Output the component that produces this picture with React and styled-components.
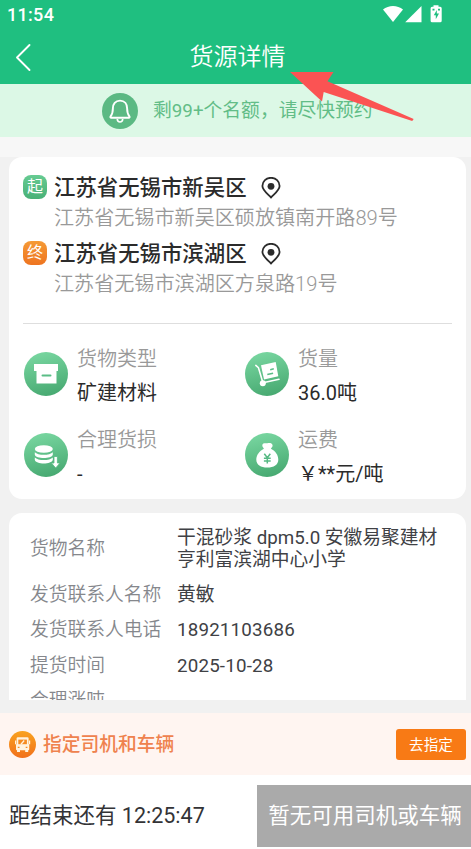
import React from 'react';
import styled, { createGlobalStyle } from 'styled-components';

const GlobalStyle = createGlobalStyle`
  * {
    box-sizing: border-box;
  }

  body {
    margin: 0;
    font-family: Roboto, 'Noto Sans CJK SC', sans-serif;
    background: #f1f1f1;
  }
`;

const Page = styled.div`
  width: 100%;
  max-width: 471px;
  height: 849px;
  display: flex;
  flex-direction: column;
  overflow: hidden;
  position: relative;
  background: linear-gradient(#f7f7f7 157px, #f1f1f1 157px);
`;

const Header = styled.header`
  height: 84px;
  flex-shrink: 0;
  background: #1fbf80;
  color: #fff;
`;

const StatusBar = styled.div`
  height: 29px;
  padding: 0 28px 0 7px;
  display: flex;
  align-items: center;
  justify-content: space-between;
`;

const Clock = styled.span`
  font-size: 18px;
  font-weight: 500;
  letter-spacing: 0.3px;
  line-height: 29px;
`;

const NavBar = styled.div`
  height: 55px;
  padding: 0 14px;
  display: grid;
  grid-template-columns: 20px 1fr 16px;
  align-items: center;
`;

const Title = styled.h1`
  margin: 0;
  padding-top: 2px;
  font-size: 24px;
  font-weight: 350;
  line-height: 53px;
  text-align: center;
`;

const Notice = styled.div`
  height: 53px;
  flex-shrink: 0;
  padding-left: 102px;
  display: flex;
  align-items: center;
  gap: 15px;
  background: #dcf8e6;
  color: #62bd87;
  font-size: 18.8px;
  white-space: nowrap;
`;

const NoticeText = styled.span`
  padding-bottom: 4px;
`;

const Content = styled.main`
  height: 563px;
  flex-shrink: 0;
  padding: 20px 5px 0 9px;
  display: flex;
  flex-direction: column;
  gap: 14px;
  overflow: hidden;
`;

const Card = styled.section`
  flex-shrink: 0;
  background: #fff;
  border-radius: 13px;
`;

const RouteCard = styled(Card)`
  height: 342px;
  padding: 14px 14px 0;
`;

const Stop = styled.div`
  height: 66px;
  display: grid;
  grid-template-columns: 31px 1fr;
`;

const StopBadge = styled.span`
  width: 24px;
  height: 24px;
  margin-top: 4px;
  border-radius: 8px;
  color: #fff;
  font-size: 16px;
  line-height: 24px;
  text-align: center;
  background: ${(props) =>
    props.$end ? 'linear-gradient(#f59a35, #ee7420)' : 'linear-gradient(#66cb92, #48b077)'};
`;

const StopCity = styled.div`
  display: flex;
  align-items: center;
  gap: 14px;
  height: 33px;
  color: #2b2b2b;
  font-size: 21.4px;
  font-weight: 500;
`;

const CityName = styled.span`
  line-height: 28px;
`;

const StopAddress = styled.div`
  color: #999;
  font-size: 20.1px;
  font-weight: 350;
  line-height: 28px;
`;

const Divider = styled.div`
  height: 1px;
  margin-top: 20px;
  background: #dedede;
`;

const Facts = styled.div`
  display: grid;
  grid-template-columns: 221px 1fr;
  grid-auto-rows: 81px;
  padding-top: 18px;
`;

const Fact = styled.div`
  display: flex;
  gap: 9px;
  padding-left: 1px;
`;

const FactIcon = styled.svg`
  width: 44px;
  height: 44px;
  margin-top: 10px;
  flex-shrink: 0;
`;

const FactLabel = styled.div`
  color: #999;
  font-size: 20px;
  font-weight: 350;
  line-height: 34px;
`;

const FactValue = styled.div`
  color: #2b2b2b;
  font-size: 20px;
  line-height: 34px;
`;

const DetailCard = styled(Card)`
  padding: 15px 21px 0;
  display: flex;
  flex-direction: column;
  gap: 13.6px;
  border-radius: 13px 13px 0 0;
  height: 187px;
  overflow: hidden;
`;

const DetailRow = styled.div`
  display: grid;
  grid-template-columns: 147px 1fr;
  align-items: center;
  flex-shrink: 0;
  min-height: 21.7px;
  font-size: 18.75px;
  line-height: 21.7px;
`;

const DetailLabel = styled.span`
  color: #85878c;
  font-weight: 350;
`;

const DetailValue = styled.span`
  color: #404145;
  letter-spacing: ${(props) => (props.$numeric ? '0.18px' : 'normal')};
`;

const DriverBar = styled.div`
  height: 62px;
  flex-shrink: 0;
  margin-top: 13px;
  padding: 0 5px 0 9px;
  display: flex;
  align-items: center;
  gap: 7px;
  background: #fff5f1;
`;

const DriverText = styled.span`
  flex: 1;
  padding-bottom: 3px;
  color: #ef824e;
  font-size: 18.75px;
  font-weight: 500;
`;

const AssignButton = styled.button`
  width: 70px;
  height: 31px;
  padding: 0;
  border: none;
  border-radius: 3px;
  background: #f87a15;
  color: #fff;
  font-family: inherit;
  font-size: 14.6px;
  line-height: 32px;
`;

const BottomBar = styled.div`
  height: 74px;
  flex-shrink: 0;
  padding-left: 9px;
  display: flex;
  align-items: flex-start;
  justify-content: space-between;
  padding-top: 10px;
  background: #fff;
`;

const Countdown = styled.span`
  color: #333336;
  font-size: 21.5px;
  line-height: 62px;
  white-space: nowrap;
`;

const DisabledButton = styled.button`
  width: 214px;
  height: 62px;
  padding: 0 0 0 2px;
  border: none;
  background: #aaa;
  color: #fff;
  font-family: inherit;
  font-size: 21.5px;
  line-height: 62px;
  white-space: nowrap;
`;

const Pointer = styled.svg`
  position: absolute;
  left: 288px;
  top: 70px;
  pointer-events: none;
`;

const stops = [
  { tag: '起', city: '江苏省无锡市新吴区', address: '江苏省无锡市新吴区硕放镇南开路89号' },
  { tag: '终', city: '江苏省无锡市滨湖区', address: '江苏省无锡市滨湖区方泉路19号', end: true },
];

const facts = [
  { icon: 'box', label: '货物类型', value: '矿建材料' },
  { icon: 'cart', label: '货量', value: '36.0吨' },
  { icon: 'coins', label: '合理货损', value: '-' },
  { icon: 'bag', label: '运费', value: '￥**元/吨' },
];

const details = [
  { label: '货物名称', value: '干混砂浆 dpm5.0 安徽易聚建材亨利富滨湖中心小学' },
  { label: '发货联系人名称', value: '黄敏' },
  { label: '发货联系人电话', value: '18921103686', numeric: true },
  { label: '提货时间', value: '2025-10-28', numeric: true },
  { label: '合理涨吨', value: '' },
];

// white glyphs drawn inside the 44px green circles
const glyphs = {
  box: (
    <>
      <path d="M10 12h24v7H10z" fill="#fff" />
      <path d="M12.5 18h20v13.5h-20z" fill="#fff" />
      <path d="M18.5 23.5h8" stroke="#5abd86" strokeWidth="2" strokeLinecap="round" />
    </>
  ),
  cart: (
    <>
      <path d="M16 13.3l14.7-3.2 2.6 14.1L19 27.6z" fill="#fff" />
      <path d="M25.2 17.7l3.6-.9M22.3 22.6l5.8-1.4" stroke="#5abd86" strokeWidth="1.5" />
      <path d="M10.8 13.4l2.6 2.2 4.3 14.3" fill="none" stroke="#fff" strokeWidth="1.6" strokeLinecap="round" />
      <path d="M18 30.8l16-3.6" stroke="#fff" strokeWidth="1.6" strokeLinecap="round" />
      <circle cx="17.8" cy="31.2" r="3" fill="#fff" />
    </>
  ),
  coins: (
    <>
      <g fill="#fff">
        <ellipse cx="19.8" cy="16" rx="9" ry="3.8" />
        <path d="M10.8 19.2c3 3.4 15 3.4 18 0v2.6c-1 4.4-17 4.4-18 0z" />
        <path d="M10.8 24.4c3 3.4 15 3.4 18 0v2.4c-1 5-17 5-18 0z" />
      </g>
      <path d="M30 23.5h3.4V30H36l-4.3 5-4.3-5H30z" fill="#fff" stroke="#57ba84" strokeWidth="0.8" />
    </>
  ),
  bag: (
    <>
      <path d="M17.3 12.6c0-3 3-2.2 5-2.4 2-.4 5-.4 5.3 2 .1 1.8-1.3 2.6-1.7 3.5 4.7 2.3 7.4 6.4 7.4 11 0 5-4.5 7.8-11 7.8s-11-2.8-11-7.8c0-4.6 3-8.7 7.6-11-.4-.9-1.6-1.6-1.6-3.1z" fill="#fff" />
      <path d="M19.3 20.7l3 4 3-4M18.9 25.2h6.8M18.9 28h6.8M22.3 24.5v6" fill="none" stroke="#57ba84" strokeWidth="1.5" />
    </>
  ),
};

function CircleIcon({ name }) {
  return (
    <FactIcon viewBox="0 0 44 44">
      <defs>
        <linearGradient id={`green-${name}`} x1="0.35" y1="0" x2="0.6" y2="1">
          <stop offset="0" stopColor="#78d6a0" />
          <stop offset="1" stopColor="#47a971" />
        </linearGradient>
      </defs>
      <circle cx="22" cy="22" r="22" fill={`url(#green-${name})`} />
      {glyphs[name]}
    </FactIcon>
  );
}

function StatusIcons() {
  return (
    <svg width="61" height="19" viewBox="0 0 61 19" fill="#fff">
      <path d="M1 4.4C6.5-.3 15.5-.3 21 4.4L11 17z" />
      <path d="M39.5.9v16.3H23.2z" />
      <path d="M51.5 1.8V.3h5v1.5h1.7q1.5 0 1.5 1.5v12.4q0 1.5-1.5 1.5h-8.1q-1.5 0-1.5-1.500V3.300q0-1.500 1.500-1.500z" />
      <path d="M54.8 5L51.800 10.200h2v4l3.200-5.600h-2.200zM50.500 3.800h2v1.800h-2zM56 3.800h2v1.800h-2z" fill="#1fbf80" />
    </svg>
  );
}

function PinIcon() {
  return (
    <svg width="20" height="22" viewBox="0 0 20 22">
      <path d="M10 20.5C6.2 16.6 1.4 13 1.4 9A8.6 8.2 0 0 1 18.600 9C18.600 13 13.800 16.600 10 20.500z" fill="none" stroke="#2b2b2b" strokeWidth="1.8" strokeLinejoin="round" />
      <circle cx="10" cy="9.3" r="3.4" fill="#2b2b2b" />
    </svg>
  );
}

function BellIcon() {
  return (
    <svg width="36" height="36" viewBox="0 0 36 36">
      <circle cx="18" cy="18" r="18" fill="#5bb983" />
      <path d="M18 7.6c-4.7 0-7.1 3.5-7.1 7.7 0 4.7-.8 6.2-2.3 8-.5.7-.2 1.5.7 1.5h17.4c.9 0 1.2-.8.7-1.5-1.5-1.8-2.3-3.3-2.3-8 0-4.2-2.4-7.7-7.100-7.700z" fill="none" stroke="#fff" strokeWidth="1.9" />
      <path d="M15.3 26c.2 4 5.2 4 5.400 0" fill="none" stroke="#fff" strokeWidth="1.7" />
    </svg>
  );
}

function TruckIcon() {
  return (
    <svg width="27" height="27" viewBox="0 0 27 27">
      <defs>
        <linearGradient id="orange" x1="0" y1="0" x2="0" y2="1">
          <stop offset="0" stopColor="#f9a21f" />
          <stop offset="1" stopColor="#f1701b" />
        </linearGradient>
      </defs>
      <circle cx="13.5" cy="13.5" r="13.5" fill="url(#orange)" />
      <g fill="#fff3df">
        <rect x="7.6" y="6.2" width="12" height="9" rx="1.2" />
        <rect x="7" y="13" width="13.2" height="6.200" rx="1" />
        <rect x="6" y="9.500" width="1.200" height="3.800" />
        <rect x="20" y="9.500" width="1.200" height="3.800" />
        <rect x="8" y="18.500" width="3" height="2.500" />
        <rect x="16.200" y="18.500" width="3" height="2.500" />
      </g>
      <rect x="9.300" y="8.600" width="8.600" height="4.600" fill="#f58b20" />
      <path d="M12 13.200l3.200-3.700" stroke="#fff3df" strokeWidth="1.3" />
      <path d="M8.8 16.300h1.700M16.700 16.300h1.700" stroke="#f58b20" strokeWidth="1.3" />
    </svg>
  );
}

function App() {
  return (
    <>
      <GlobalStyle />
      <Page>
        <Header>
          <StatusBar>
            <Clock>11:54</Clock>
            <StatusIcons />
          </StatusBar>
          <NavBar>
            <svg width="20" height="30" viewBox="0 0 20 30">
              <path d="M15.5 3L3 15.5 15.5 28" fill="none" stroke="#fff" strokeWidth="1.9" strokeLinecap="round" strokeLinejoin="round" />
            </svg>
            <Title>货源详情</Title>
          </NavBar>
        </Header>

        <Notice>
          <BellIcon />
          <NoticeText>剩99+个名额，请尽快预约</NoticeText>
        </Notice>

        <Content>
          <RouteCard>
            {stops.map((stop) => (
              <Stop key={stop.tag}>
                <StopBadge $end={stop.end}>{stop.tag}</StopBadge>
                <div>
                  <StopCity>
                    <CityName>{stop.city}</CityName>
                    <PinIcon />
                  </StopCity>
                  <StopAddress>{stop.address}</StopAddress>
                </div>
              </Stop>
            ))}
            <Divider />
            <Facts>
              {facts.map((fact) => (
                <Fact key={fact.icon}>
                  <CircleIcon name={fact.icon} />
                  <div>
                    <FactLabel>{fact.label}</FactLabel>
                    <FactValue>{fact.value}</FactValue>
                  </div>
                </Fact>
              ))}
            </Facts>
          </RouteCard>

          <DetailCard>
            {details.map((row) => (
              <DetailRow key={row.label}>
                <DetailLabel>{row.label}</DetailLabel>
                <DetailValue $numeric={row.numeric}>{row.value}</DetailValue>
              </DetailRow>
            ))}
          </DetailCard>
        </Content>

        <DriverBar>
          <TruckIcon />
          <DriverText>指定司机和车辆</DriverText>
          <AssignButton>去指定</AssignButton>
        </DriverBar>

        <BottomBar>
          <Countdown>距结束还有 12:25:47</Countdown>
          <DisabledButton>暂无可用司机或车辆</DisabledButton>
        </BottomBar>

        <Pointer width="128" height="54" viewBox="0 0 128 54">
          <path d="M2 2h43.5l-6 9.2L125.7 49l-1.5 2L35.7 22 34 31.5z" fill="#fb5353" />
        </Pointer>
      </Page>
    </>
  );
}

export default App;
